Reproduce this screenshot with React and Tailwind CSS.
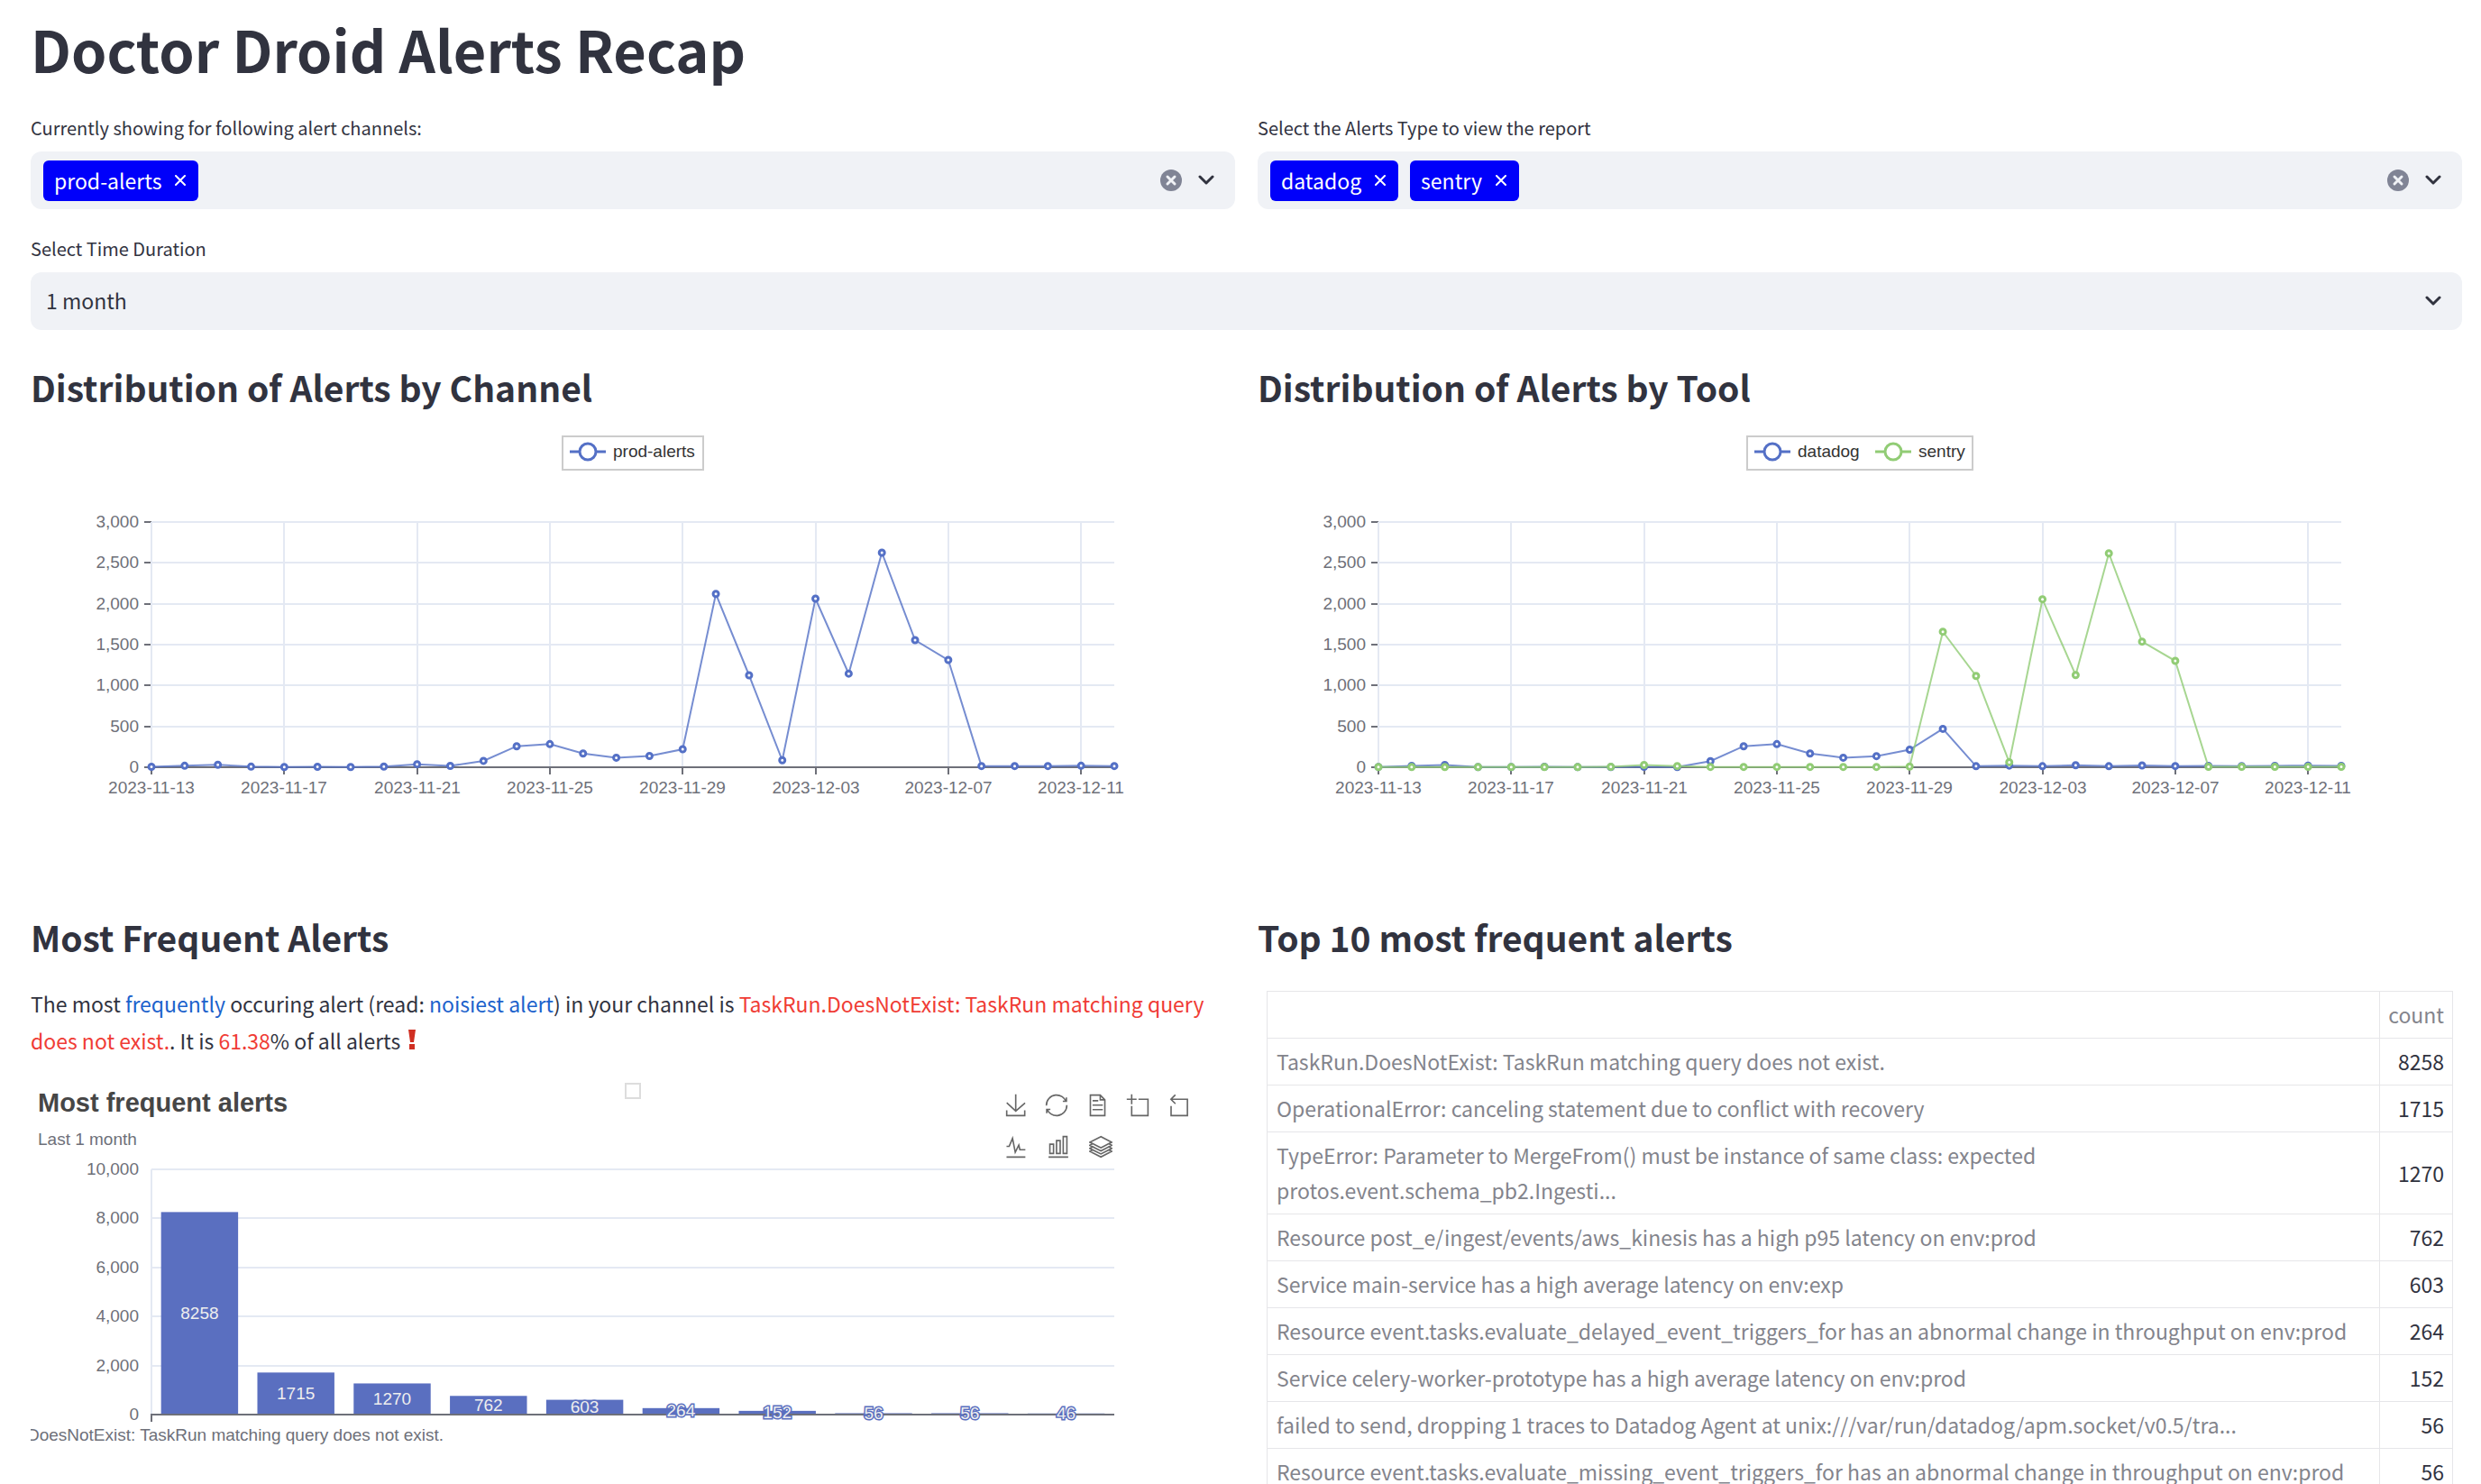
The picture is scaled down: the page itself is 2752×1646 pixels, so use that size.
import React from "react";

const BLUE = "#5470c6";
const GREEN = "#91cc75";
const AXIS = "#6e7079";
const GRID = "#e4e9f3";

const PLOT = { left: 134, right: 1202, top: 96, bottom: 368 };
const PLOT_WIDTH = PLOT.right - PLOT.left;
const PLOT_HEIGHT = PLOT.bottom - PLOT.top;

const DATES = [
  "2023-11-13",
  "2023-11-17",
  "2023-11-21",
  "2023-11-25",
  "2023-11-29",
  "2023-12-03",
  "2023-12-07",
  "2023-12-11",
];

const PROD_ALERTS = [
  5, 18, 30, 7, 3, 6, 3, 8, 37, 17, 78, 257, 283, 168, 117, 138, 220, 2120, 1125, 85, 2062, 1145,
  2625, 1555, 1312, 15, 15, 15, 18, 15,
];
const DATADOG = [
  4, 16, 28, 2, 2, 6, 2, 2, 5, 3, 75, 257, 283, 168, 117, 136, 215, 470, 13, 20, 13, 25, 13, 22, 15,
  17, 15, 17, 20, 17,
];
const SENTRY = [
  3, 3, 3, 3, 3, 3, 3, 5, 27, 15, 4, 4, 4, 4, 4, 4, 8, 1658, 1117, 62, 2055, 1128, 2617, 1537, 1301,
  6, 6, 6, 6, 6,
];

const ALERTS = [
  ["TaskRun.DoesNotExist: TaskRun matching query does not exist.", 8258],
  ["OperationalError: canceling statement due to conflict with recovery", 1715],
  [
    "TypeError: Parameter to MergeFrom() must be instance of same class: expected\nprotos.event.schema_pb2.Ingesti...",
    1270,
  ],
  ["Resource post_e/ingest/events/aws_kinesis has a high p95 latency on env:prod", 762],
  ["Service main-service has a high average latency on env:exp", 603],
  [
    "Resource event.tasks.evaluate_delayed_event_triggers_for has an abnormal change in throughput on env:prod",
    264,
  ],
  ["Service celery-worker-prototype has a high average latency on env:prod", 152],
  ["failed to send, dropping 1 traces to Datadog Agent at unix:///var/run/datadog/apm.socket/v0.5/tra...", 56],
  [
    "Resource event.tasks.evaluate_missing_event_triggers_for has an abnormal change in throughput on env:prod",
    56,
  ],
];

const BARS = [8258, 1715, 1270, 762, 603, 264, 152, 56, 56, 46];

const TOOLS = [
  [
    ["Save as image", "M4.7,22.9L29.3,45.5L54.7,23.4M4.6,43.6L4.6,58L53.8,58L53.8,43.6M29.2,45.1L29.2,0"],
    [
      "Restore",
      "M47,18.9h9.8V8.7 M56.3,20.1 C52.1,9,40.5,0.6,26.8,2.1C12.6,3.7,1.6,16.2,2.1,30.6 M13,41.1H3.1v10.2 M3.7,39.9c4.2,11.1,15.8,19.5,29.5,18 c14.2-1.6,25.2-14.1,24.7-28.5",
    ],
    ["Data view", "M17.5,17.3H33 M45.4,29.5h-28 M11.5,2v56H51V14.8L38.4,2H11.5z M38.4,2.2v12.7H51 M45.4,41.7h-28"],
    ["Zoom", "M0,13.5h26.9 M13.5,26.9V0 M32.1,13.5H58V58H13.5 V32.1"],
    ["Zoom reset", "M22,1.4L9.9,13.5l12.3,12.3 M10.3,13.5H54.9v44.6 H10.3v-26"],
  ],
  [
    ["Switch to line chart", "M4.1,28.9h7.1l9.3-22l7.4,38l9.7-19.7l3,12.8h14.9M4.1,58h51.4"],
    ["Switch to bar chart", "M6.7,22.9h10V48h-10V22.9zM24.9,13h10v35h-10V13zM43.2,2h10v46h-10V2zM3.1,58h53.7"],
    [
      "Stack",
      "M8.2,38.4l-8.4,4.1l30.6,15.3L60,42.5l-8.1-4.1l-21.5,11L8.2,38.4z M51.9,30l-8.1,4.2l-13.4,6.9l-13.9-6.9L8.2,30l-8.4,4.2l8.4,4.2l22.2,11l21.5-11l8.1-4.2L51.9,30z M51.9,21.7l-8.1,4.2L35.7,30l-5.3,2.8L24.9,30l-8.4-4.1l-8.3-4.2l-8.4,4.2L8.2,30l8.3,4.2l13.9,6.9l13.4-6.9l8.1-4.2l8.1-4.1L51.9,21.7zM30.4,2.2L-0.2,17.5l8.4,4.1l8.3,4.2l8.4,4.2l5.5,2.7l5.3-2.7l8.1-4.2l8.1-4.2l8.1-4.1L30.4,2.2z",
    ],
  ],
];

function Chevron() {
  return (
    <svg viewBox="0 0 18 12" className="h-3 w-[18px]" fill="none" stroke="#31333f" strokeWidth="3" strokeLinecap="round" strokeLinejoin="round" aria-hidden="true">
      <path d="M2 2l7 7 7-7" />
    </svg>
  );
}

function Tag({ children }) {
  return (
    <span className="flex h-[45px] items-center gap-[15px] rounded-md bg-[#0000fa] pl-3 pr-[14px] text-[23px] leading-8 text-white">
      {children}
      <button type="button" aria-label={`Remove ${children}`} className="flex">
        <svg viewBox="0 0 12 12" className="size-3" fill="none" stroke="white" strokeWidth="2" strokeLinecap="round" aria-hidden="true">
          <path d="M1 1l10 10M11 1L1 11" />
        </svg>
      </button>
    </span>
  );
}

function MultiSelect({ label, tags }) {
  return (
    <div role="group" aria-label={label}>
      <div className="mb-[10px] text-xl leading-8">{label}</div>
      <div className="flex h-16 items-center rounded-xl bg-[#f0f2f6] pl-[14px] pr-[23px]">
        <div className="flex flex-1 gap-[13px]">
          {tags.map((tag) => (
            <Tag key={tag}>{tag}</Tag>
          ))}
        </div>
        <button type="button" aria-label="Clear all" className="mr-[18px]">
          <svg viewBox="0 0 24 24" className="size-6" aria-hidden="true">
            <circle cx="12" cy="12" r="12" fill="#808495" />
            <path d="M8 8l8 8M16 8l-8 8" stroke="#f0f2f6" strokeWidth="3" strokeLinecap="round" />
          </svg>
        </button>
        <button type="button" aria-label="Open">
          <Chevron />
        </button>
      </div>
    </div>
  );
}

function Heading({ children }) {
  return <h2 className="text-[39px] font-bold leading-[56px]">{children}</h2>;
}

function LineChart({ title, legend, series }) {
  const x = (i) => PLOT.left + (i * PLOT_WIDTH) / 29;
  const y = (v) => PLOT.bottom - (v * PLOT_HEIGHT) / 3000;
  return (
    <svg viewBox="0 0 1336 464" className="mt-[26px] block h-auto w-full font-['Liberation_Sans',sans-serif] text-[19px]" role="img" aria-label={title}>
      <rect x={legend.x} y="1" width={legend.width} height="37" fill="white" stroke="#cccccc" strokeWidth="2" />
      {series.map((s) => (
        <g key={s.name}>
          <path d={`M${s.legendX - 20} 18h40`} stroke={s.color} strokeWidth="3" />
          <circle cx={s.legendX} cy="18" r="9" fill="white" stroke={s.color} strokeWidth="3" />
          <text x={s.legendX + 28} y="24" fill="#333333">
            {s.name}
          </text>
        </g>
      ))}
      {[0, 500, 1000, 1500, 2000, 2500, 3000].map((v) => (
        <g key={v}>
          {v > 0 && <path d={`M${PLOT.left} ${Math.round(y(v))}H${PLOT.right}`} stroke={GRID} strokeWidth="2" />}
          <path d={`M${PLOT.left - 8} ${Math.round(y(v))}h8`} stroke={AXIS} strokeWidth="2" />
          <text x="120" y={Math.round(y(v)) + 6} textAnchor="end" fill={AXIS}>
            {v.toLocaleString("en-US")}
          </text>
        </g>
      ))}
      {DATES.map((date, i) => (
        <g key={date}>
          <path d={`M${Math.round(x(i * 4))} ${PLOT.top}V${PLOT.bottom}`} stroke={GRID} strokeWidth="2" />
          <path d={`M${Math.round(x(i * 4))} ${PLOT.bottom}v8`} stroke={AXIS} strokeWidth="2" />
          <text x={Math.round(x(i * 4))} y="397" textAnchor="middle" fill={AXIS}>
            {date}
          </text>
        </g>
      ))}
      <path d={`M${PLOT.left} ${PLOT.bottom}H${PLOT.right}`} stroke={AXIS} strokeWidth="2" />
      {series.map((s) => (
        <g key={s.name} stroke={s.color}>
          <polyline points={s.values.map((v, i) => `${x(i)},${y(v)}`).join(" ")} fill="none" strokeWidth="2" opacity="0.8" />
          {s.values.map((v, i) => (
            <circle key={i} cx={x(i)} cy={y(v)} r="3" fill="white" strokeWidth="3" />
          ))}
        </g>
      ))}
    </svg>
  );
}

function BarChart() {
  const slot = PLOT_WIDTH / BARS.length;
  const y = (v) => PLOT.bottom - (v * PLOT_HEIGHT) / 10000;
  return (
    <svg viewBox="0 84 1336 380" className="block h-auto w-full font-['Liberation_Sans',sans-serif] text-[19px]" role="img" aria-label="Most frequent alerts">
      {[0, 2000, 4000, 6000, 8000, 10000].map((v) => (
        <g key={v}>
          {v > 0 && <path d={`M${PLOT.left} ${Math.round(y(v))}H${PLOT.right}`} stroke={GRID} strokeWidth="2" />}
          <text x="120" y={Math.round(y(v)) + 6} textAnchor="end" fill={AXIS}>
            {v.toLocaleString("en-US")}
          </text>
        </g>
      ))}
      <path d={`M${PLOT.left} ${PLOT.top}V${PLOT.bottom}`} stroke={GRID} strokeWidth="2" />
      {BARS.map((v, i) => (
        <rect key={i} x={PLOT.left + slot * i + slot / 10} y={y(v)} width={slot * 0.8} height={PLOT.bottom - y(v)} fill="#5a6fc0" />
      ))}
      <path d={`M${PLOT.left} ${PLOT.bottom + 8}v-8H${PLOT.right}`} fill="none" stroke={AXIS} strokeWidth="2" />
      {BARS.map((v, i) => (
        <text
          key={i}
          x={PLOT.left + slot * (i + 0.5)}
          y={(y(v) + PLOT.bottom) / 2 + 6}
          textAnchor="middle"
          fill="#eeeeee"
          stroke="#5a6fc0"
          strokeWidth="3"
          paintOrder="stroke"
        >
          {v}
        </text>
      ))}
      <text x={PLOT.left + slot / 2} y="397" textAnchor="middle" fill={AXIS}>
        {ALERTS[0][0]}
      </text>
    </svg>
  );
}

function FrequentChart() {
  return (
    <figure className="mt-[26px]">
      <div className="grid h-[84px] grid-cols-[1fr_auto_1fr] items-start font-['Liberation_Sans',sans-serif]">
        <figcaption className="pl-2 pt-1">
          <div className="text-[29px] font-bold leading-9 text-[#464646]">Most frequent alerts</div>
          <div className="mt-[11px] text-[19px] leading-6 text-[#6e7079]">Last 1 month</div>
        </figcaption>
        <div className="size-[18px] border-2 border-[#dddddd]" />
        <div className="mr-[50px] flex flex-col items-start gap-5 justify-self-end pt-3">
          {TOOLS.map((row, i) => (
            <div key={i} className={i === 0 ? "flex gap-[19px]" : "flex gap-[21px]"}>
              {row.map(([name, d]) => (
                <button key={name} type="button" aria-label={name}>
                  <svg viewBox="-2 -2 64 64" className="size-[26px]" fill="none" stroke="#666666" strokeWidth="4" aria-hidden="true">
                    <path d={d} />
                  </svg>
                </button>
              ))}
            </div>
          ))}
        </div>
      </div>
      <BarChart />
    </figure>
  );
}

function AlertsTable() {
  return (
    <div className="mx-[10px] mt-8">
      <table className="w-full border-collapse text-[23px] leading-[39px] text-[#83848c]">
        <thead>
          <tr>
            <th className="border border-[#e6e6e9] px-[10px] py-[6px]" aria-label="Alert" />
            <th scope="col" className="w-20 border border-[#e6e6e9] px-[9px] py-[6px] text-right font-normal">
              count
            </th>
          </tr>
        </thead>
        <tbody>
          {ALERTS.map(([name, count]) => (
            <tr key={name}>
              <th scope="row" className="whitespace-pre-line border border-[#e6e6e9] px-[10px] py-[6px] text-left font-normal">
                {name}
              </th>
              <td className="border border-[#e6e6e9] px-[9px] py-[6px] text-right text-[#31333f]">{count}</td>
            </tr>
          ))}
        </tbody>
      </table>
    </div>
  );
}

export default function App() {
  return (
    <main className="h-screen overflow-hidden bg-white pl-[34px] pr-[21px] pt-3 font-['Noto_Sans_CJK_SC',sans-serif] text-[#31333f]">
      <h1 className="text-[63px] font-bold leading-[84px]">Doctor Droid Alerts Recap</h1>

      <div className="mt-[30px] grid grid-cols-2 gap-[25px]">
        <MultiSelect label="Currently showing for following alert channels:" tags={["prod-alerts"]} />
        <MultiSelect label="Select the Alerts Type to view the report" tags={["datadog", "sentry"]} />
      </div>

      <div className="mt-7">
        <label htmlFor="duration" className="mb-[10px] block text-xl leading-8">
          Select Time Duration
        </label>
        <div className="grid items-center">
          <select id="duration" defaultValue="1 month" className="col-start-1 row-start-1 h-16 w-full appearance-none rounded-xl bg-[#f0f2f6] px-[17px] pb-[2px] text-[23px]">
            <option>1 month</option>
          </select>
          <span className="pointer-events-none col-start-1 row-start-1 mr-[23px] justify-self-end">
            <Chevron />
          </span>
        </div>
      </div>

      <div className="mt-[35px] grid grid-cols-2 gap-[25px]">
        <section>
          <Heading>Distribution of Alerts by Channel</Heading>
          <LineChart
            title="Distribution of Alerts by Channel"
            legend={{ x: 590, width: 156 }}
            series={[{ name: "prod-alerts", color: BLUE, legendX: 618, values: PROD_ALERTS }]}
          />
        </section>
        <section>
          <Heading>Distribution of Alerts by Tool</Heading>
          <LineChart
            title="Distribution of Alerts by Tool"
            legend={{ x: 543, width: 250 }}
            series={[
              { name: "datadog", color: BLUE, legendX: 571, values: DATADOG },
              { name: "sentry", color: GREEN, legendX: 705, values: SENTRY },
            ]}
          />
        </section>
      </div>

      <div className="mt-16 grid grid-cols-2 gap-[25px]">
        <section>
          <Heading>Most Frequent Alerts</Heading>
          <p className="mt-[26px] text-[23px] leading-[41px]">
            The most <span className="text-[#1c62cc]">frequently</span> occuring alert (read:{" "}
            <span className="text-[#1c62cc]">noisiest alert</span>) in your channel is{" "}
            <span className="text-[#f03c35]">TaskRun.DoesNotExist: TaskRun matching query does not exist.</span>. It is{" "}
            <span className="text-[#f03c35]">61.38</span>% of all alerts{" "}
            <svg viewBox="0 0 8 22" className="ml-1 inline-block h-[22px] w-2 align-baseline" fill="#d02f22" role="img" aria-label="exclamation">
              <path d="M0 0h8L6 14H2zM1 16h6v6H1z" />
            </svg>
          </p>
          <FrequentChart />
        </section>
        <section>
          <Heading>Top 10 most frequent alerts</Heading>
          <AlertsTable />
        </section>
      </div>
    </main>
  );
}
